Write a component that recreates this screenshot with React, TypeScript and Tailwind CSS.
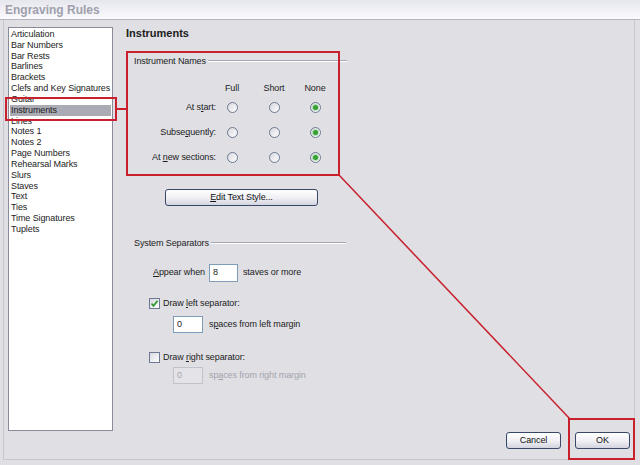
import React from "react";

const items = [
  "Articulation",
  "Bar Numbers",
  "Bar Rests",
  "Barlines",
  "Brackets",
  "Clefs and Key Signatures",
  "Guitar",
  "Instruments",
  "Lines",
  "Notes 1",
  "Notes 2",
  "Page Numbers",
  "Rehearsal Marks",
  "Slurs",
  "Staves",
  "Text",
  "Ties",
  "Time Signatures",
  "Tuplets",
];

function Radio({ checked }: { checked?: boolean }) {
  return (
    <span className="w-[11px] h-[11px] rounded-full border border-[#6b7a92] bg-linear-to-br from-[#d8d8e0] to-white flex items-center justify-center">
      {checked && (
        <span className="w-[5px] h-[5px] rounded-full bg-[#35a035] shadow-[0_0_0_1px_#b4e0b4]" />
      )}
    </span>
  );
}

function Check({ checked }: { checked?: boolean }) {
  return (
    <span className="w-[11px] h-[11px] border border-[#6b7a92] bg-linear-to-br from-[#d8d8e0] to-white flex items-center justify-center shrink-0">
      {checked && (
        <svg width="9" height="9" viewBox="0 0 9 9">
          <path d="M1.5 4.5 L3.5 6.8 L7.6 1.8" fill="none" stroke="#2f9a2f" strokeWidth="1.8" />
        </svg>
      )}
    </span>
  );
}

function XpButton({ children, className }: { children: React.ReactNode; className?: string }) {
  return (
    <div
      className={
        "h-[17px] rounded-[3px] border border-[#3a4868] bg-linear-to-b from-white via-[#f1f1f5] to-[#d4d4e0] flex items-center justify-center text-[9px] text-[#111] " +
        (className || "")
      }
    >
      {children}
    </div>
  );
}

function GroupLabel({ children, w }: { children: React.ReactNode; w: string }) {
  return (
    <div className={"flex items-center h-[12px] " + w}>
      <span className="leading-[12px] whitespace-nowrap">{children}</span>
      <div className="flex-1 ml-[2px] h-[2px] border-t border-[#a6a6b6] border-b border-b-white" />
    </div>
  );
}

export default function App() {
  return (
    <div className="w-[640px] h-[465px] bg-[#dfdfe4] relative overflow-hidden font-['Liberation_Sans',Arial,sans-serif] text-[9px] tracking-[-0.1px] text-[#1c1c1c]">
      {/* Title bar */}
      <div className="h-[20px] border-b border-[#b6b6c0] bg-linear-to-b from-[#e6e6ee] to-[#fbfbfd] flex items-center pl-[5px]">
        <span className="text-[12px] font-bold text-[#a0a0ac] leading-none tracking-normal">Engraving Rules</span>
      </div>

      {/* Body */}
      <div className="ml-[3px] w-[632px] h-[440px] border-l border-r border-b border-[#c6c6ce] flex">
        {/* List */}
        <div className="mt-[7px] ml-[4px] w-[105px] h-[404px] bg-white border border-[#8a8a98] pt-[1px] px-[1px]">
          {items.map((it) => (
            <div
              key={it}
              className={
                "h-[10.83px] leading-[10.83px] pl-[1px] whitespace-nowrap " +
                (it === "Instruments" ? "bg-[#ababb5]" : "")
              }
            >
              {it}
            </div>
          ))}
        </div>

        {/* Right panel */}
        <div className="ml-[13px] flex-1 flex flex-col">
          <div className="mt-[6px] h-[14px] leading-[14px] text-[11px] font-bold tracking-normal">Instruments</div>

          <div className="mt-[15px] ml-[8px]">
            <GroupLabel w="w-[213px]">Instrument Names</GroupLabel>
          </div>

          <div className="ml-[8px] mt-[16px] flex h-[12px] items-center">
            <div className="w-[82px]" />
            <div className="w-[32px] text-center">Full</div>
            <div className="w-[32px] ml-[10px] text-center">Short</div>
            <div className="w-[32px] ml-[9px] text-center">None</div>
          </div>

          {[
            <>At s<u>t</u>art:</>,
            <>Subse<u>q</u>uently:</>,
            <>At <u>n</u>ew sections:</>,
          ].map((label, i) => (
            <div key={i} className="ml-[8px] flex h-[25px] items-center">
              <div className="w-[82px] text-right whitespace-nowrap">{label}</div>
              <div className="w-[32px] flex justify-center">
                <Radio />
              </div>
              <div className="w-[32px] ml-[10px] flex justify-center">
                <Radio />
              </div>
              <div className="w-[32px] ml-[9px] flex justify-center">
                <Radio checked />
              </div>
            </div>
          ))}

          <div className="mt-[19px] ml-[39px]">
            <XpButton className="w-[153px]">
              <span>
                <u>E</u>dit Text Style...
              </span>
            </XpButton>
          </div>

          <div className="mt-[31px] ml-[8px]">
            <GroupLabel w="w-[212px]">System Separators</GroupLabel>
          </div>

          <div className="mt-[15px] ml-[27px] flex items-center h-[18px]">
            <span className="whitespace-nowrap">
              <u>A</u>ppear when
            </span>
            <div className="ml-[4px] w-[29px] h-[18px] bg-white border border-[#7f9db9] flex items-center pl-[3px]">8</div>
            <span className="ml-[5px]">staves or more</span>
          </div>

          <div className="mt-[16px] ml-[23px] flex items-center h-[11px]">
            <Check checked />
            <span className="ml-[3px] whitespace-nowrap">
              Draw <u>l</u>eft separator:
            </span>
          </div>

          <div className="mt-[7px] ml-[47px] flex items-center h-[17px]">
            <div className="w-[30px] h-[17px] bg-white border border-[#7f9db9] flex items-center pl-[3px]">0</div>
            <span className="ml-[6px] whitespace-nowrap">
              s<u>p</u>aces from left margin
            </span>
          </div>

          <div className="mt-[19px] ml-[23px] flex items-center h-[11px]">
            <Check />
            <span className="ml-[3px] whitespace-nowrap">
              Draw <u>r</u>ight separator:
            </span>
          </div>

          <div className="mt-[4px] ml-[47px] flex items-center h-[17px] text-[#a4a4ae]">
            <div className="w-[30px] h-[17px] bg-[#e4e4e8] border border-[#c2c2ca] flex items-center pl-[3px]">0</div>
            <span className="ml-[6px] whitespace-nowrap">
              sp<u>a</u>ces from right margin
            </span>
          </div>

          <div className="mt-auto mb-[10px] mr-[4px] flex justify-end gap-[14px]">
            <XpButton className="w-[55px]">Cancel</XpButton>
            <XpButton className="w-[55px]">OK</XpButton>
          </div>
        </div>
      </div>

      {/* Red annotations */}
      <div className="absolute left-[5px] top-[97px] w-[112px] h-[24px] border-2 border-[#c8202c] pointer-events-none" />
      <div className="absolute left-[126px] top-[51px] w-[214px] h-[125px] border-2 border-[#c8202c] pointer-events-none" />
      <div className="absolute left-[568px] top-[418px] w-[67px] h-[42px] border-2 border-[#c8202c] pointer-events-none" />
      <svg className="absolute left-0 top-0 pointer-events-none" width="640" height="465">
        <line x1="116" y1="109" x2="127" y2="109" stroke="#c8202c" strokeWidth="2" />
        <line x1="339" y1="175" x2="570" y2="419" stroke="#c8202c" strokeWidth="1.5" />
      </svg>
    </div>
  );
}
